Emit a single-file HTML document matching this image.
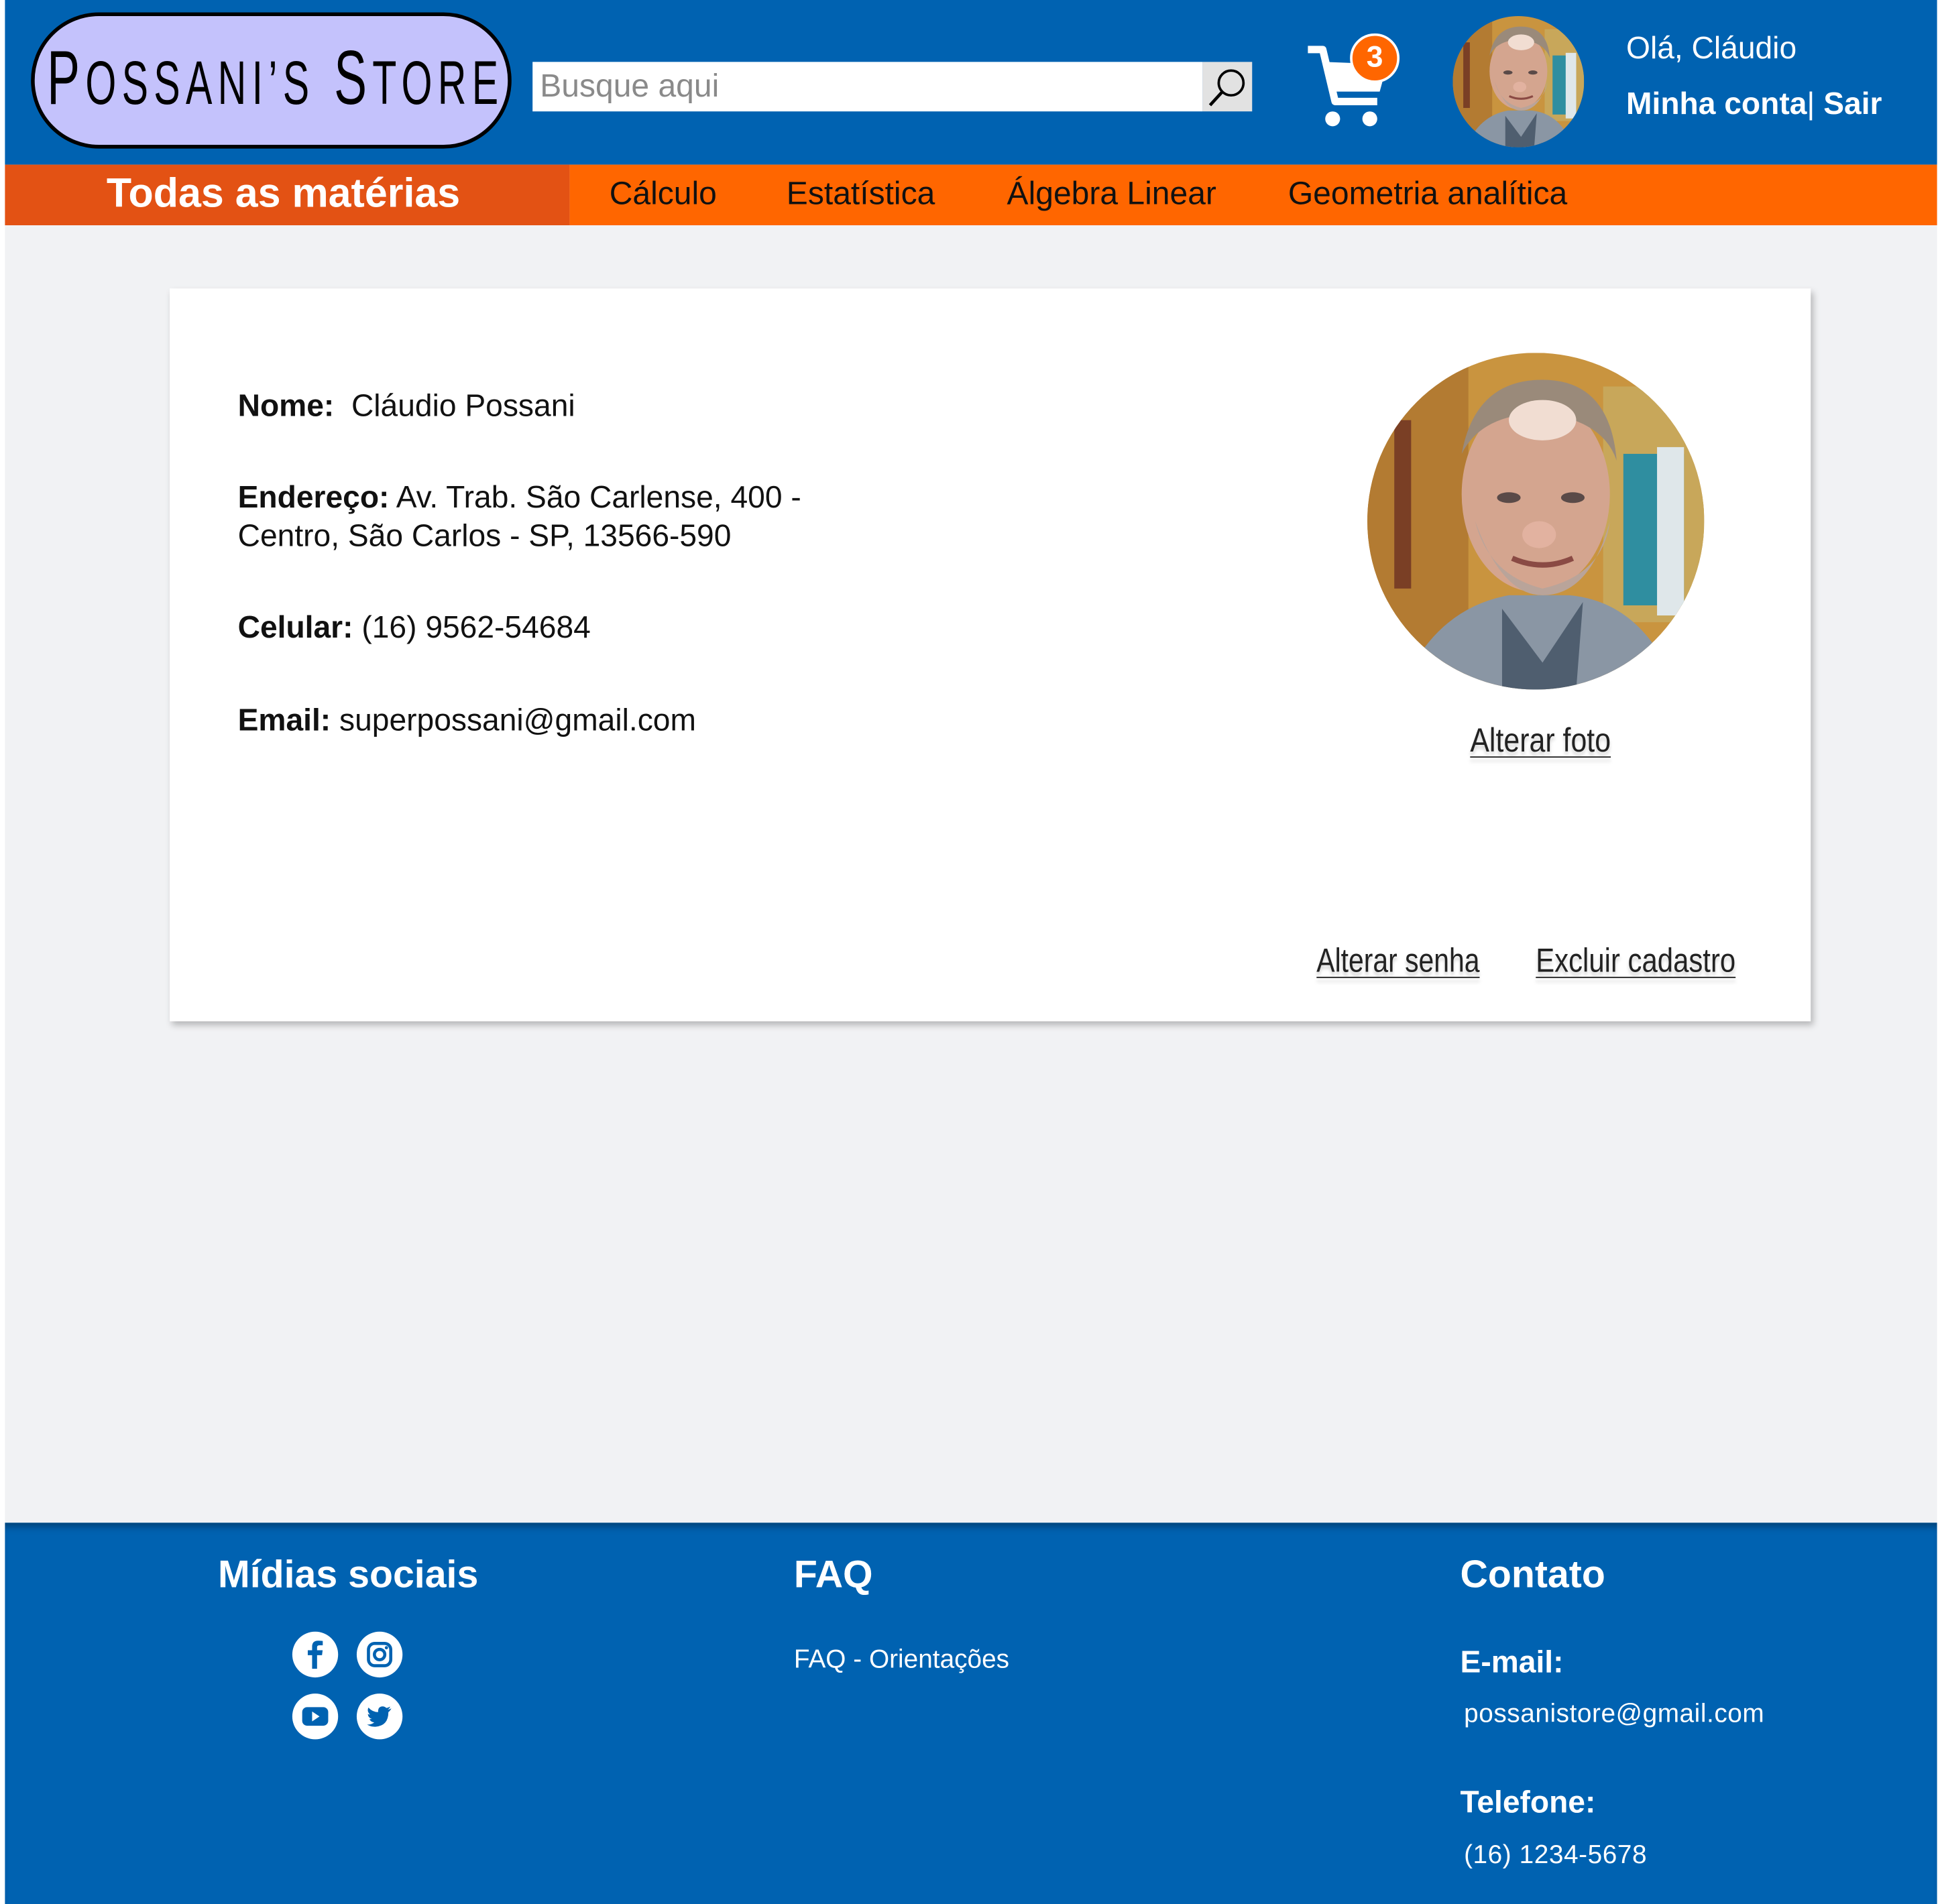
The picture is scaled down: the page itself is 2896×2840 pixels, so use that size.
<!DOCTYPE html>
<html><head><meta charset="utf-8">
<style>
html,body{margin:0;padding:0;width:2896px;height:2840px;overflow:hidden;background:#fff}
#w{position:absolute;left:0;top:0;width:1568px;height:1538px;transform:scale(1.84694,1.84655);transform-origin:0 0;font-family:"Liberation Sans",sans-serif}
.a{position:absolute;white-space:nowrap}
.lnk{color:#222;font-size:27px;text-decoration:underline;text-decoration-thickness:1px;text-underline-offset:4px;text-shadow:0 3px 3px rgba(0,0,0,.18);transform-origin:0 0}
.c{font-size:25px;color:#111}
.c b{font-weight:bold}
.nav{font-size:26px;color:#111;top:141px}
.ft{color:#fff}
.ic{position:absolute;width:37px;height:37px;border-radius:50%;background:#fff}
</style></head><body><div id="w">
<svg width="0" height="0" style="position:absolute">
<defs>
<g id="ph">
<rect x="0" y="0" width="100" height="100" fill="#c9943f"/>
<rect x="0" y="0" width="30" height="100" fill="#b37b32"/>
<rect x="8" y="20" width="5" height="50" fill="#7a3f25"/>
<rect x="70" y="10" width="30" height="70" fill="#c8a75a"/>
<rect x="76" y="30" width="18" height="45" fill="#2f8ea0"/>
<rect x="86" y="28" width="8" height="50" fill="#dfe7ea"/>
<path d="M10 100 Q20 76 42 72 L60 72 Q82 74 92 100Z" fill="#8a96a4"/>
<path d="M40 76 L52 92 L64 74 L62 100 L40 100Z" fill="#4f5e6f"/>
<ellipse cx="50" cy="42" rx="22" ry="29" fill="#d4a58f"/>
<path d="M28 30 Q32 8 52 8 Q72 8 74 32 Q70 20 52 18 Q34 18 28 30Z" fill="#9a8a7a"/>
<ellipse cx="52" cy="20" rx="10" ry="6" fill="#f1ddd2"/>
<path d="M32 50 Q40 72 52 72 Q66 72 72 50 Q70 66 52 70 Q36 66 32 50Z" fill="#b9a49a"/>
<ellipse cx="42" cy="43" rx="3.5" ry="1.6" fill="#5a4a48"/>
<ellipse cx="61" cy="43" rx="3.5" ry="1.6" fill="#5a4a48"/>
<path d="M43 61 Q52 65 61 61" stroke="#8a4a44" stroke-width="1.6" fill="none"/>
<ellipse cx="51" cy="54" rx="5" ry="4" fill="#e2b2a0"/>
</g>
<clipPath id="cc"><circle cx="50" cy="50" r="50"/></clipPath>
</defs></svg>

<!-- header -->
<div class="a" style="left:4px;top:0;width:1560px;height:133px;background:#0062B1"></div>
<div class="a" style="left:25px;top:10px;width:382px;height:104px;border:3px solid #000;border-radius:60px;background:#C4C2FC"></div>
<div class="a" style="left:38px;top:28px;font-size:62px;letter-spacing:7px;color:#000;transform:scaleX(.64);transform-origin:0 0;line-height:72px">P<span style="font-size:50px">OSSANI’S</span> S<span style="font-size:50px">TORE</span></div>
<div class="a" style="left:430px;top:50px;width:541px;height:40px;background:#fff"></div>
<div class="a" style="left:436px;top:54px;font-size:26px;color:#8a8a8a">Busque aqui</div>
<div class="a" style="left:971px;top:50px;width:40px;height:40px;background:#e2e2e2"></div>
<svg class="a" style="left:971px;top:50px" width="40" height="40" viewBox="0 0 40 40"><circle cx="23" cy="17" r="10" fill="none" stroke="#000" stroke-width="2"/><path d="M16 24 L6 35" stroke="#000" stroke-width="2.5"/></svg>
<svg class="a" style="left:1054px;top:30px" width="80" height="75" viewBox="0 0 80 75"><path d="M2 10 L14 10 L24 52 L58 52" stroke="#fff" stroke-width="6" fill="none" stroke-linejoin="round"/><path d="M16 20 L66 22 L60 44 L22 44Z" fill="#fff"/><circle cx="22" cy="66" r="6" fill="#fff"/><circle cx="52" cy="66" r="6" fill="#fff"/></svg>
<div class="a" style="left:1090px;top:27px;width:36px;height:36px;border-radius:50%;background:#FF6600;border:2px solid #fff;color:#fff;font-size:24px;font-weight:bold;text-align:center;line-height:36px">3</div>
<svg class="a" style="left:1173px;top:13px" width="106" height="106" viewBox="0 0 100 100"><g clip-path="url(#cc)"><use href="#ph"/></g></svg>
<div class="a ft" style="left:1313px;top:25px;font-size:25px">Olá, Cláudio</div>
<div class="a ft" style="left:1313px;top:70px;font-size:25px;font-weight:bold">Minha conta<span style="font-weight:normal">|</span> Sair</div>

<!-- nav -->
<div class="a" style="left:4px;top:133px;width:456px;height:49px;background:#E35214"></div>
<div class="a" style="left:460px;top:133px;width:1104px;height:49px;background:#FF6600"></div>
<div class="a" style="left:86px;top:137px;font-size:33px;font-weight:bold;color:#fff">Todas as matérias</div>
<div class="a nav" style="left:492px">Cálculo</div>
<div class="a nav" style="left:635px">Estatística</div>
<div class="a nav" style="left:813px">Álgebra Linear</div>
<div class="a nav" style="left:1040px">Geometria analítica</div>

<!-- main -->
<div class="a" style="left:4px;top:182px;width:1560px;height:1048px;background:#F1F2F4"></div>
<div class="a" style="left:137px;top:233px;width:1325px;height:592px;background:#fff;box-shadow:2px 3px 5px rgba(0,0,0,.25)"></div>
<div class="a c" style="left:192px;top:314px"><b>Nome:</b>&nbsp; Cláudio Possani</div>
<div class="a c" style="left:192px;top:387px;line-height:31px"><b>Endereço:</b> Av. Trab. São Carlense, 400 -<br>Centro, São Carlos - SP, 13566-590</div>
<div class="a c" style="left:192px;top:493px"><b>Celular:</b> (16) 9562-54684</div>
<div class="a c" style="left:192px;top:568px"><b>Email:</b> superpossani@gmail.com</div>
<svg class="a" style="left:1104px;top:285px" width="272" height="272" viewBox="0 0 100 100"><g clip-path="url(#cc)"><use href="#ph"/></g></svg>
<div class="a lnk" style="left:1187px;top:583px;transform:scaleX(.86)">Alterar foto</div>
<div class="a lnk" style="left:1063px;top:761px;transform:scaleX(.82)">Alterar senha</div>
<div class="a lnk" style="left:1240px;top:761px;transform:scaleX(.84)">Excluir cadastro</div>

<!-- footer -->
<div class="a" style="left:4px;top:1230px;width:1560px;height:308px;background:#0062B1;box-shadow:inset 0 6px 6px -3px rgba(0,0,0,.35)"></div>
<div class="a ft" style="left:176px;top:1254px;font-size:31px;font-weight:bold">Mídias sociais</div>
<div class="a ft" style="left:641px;top:1254px;font-size:31px;font-weight:bold">FAQ</div>
<div class="a ft" style="left:1179px;top:1254px;font-size:31px;font-weight:bold">Contato</div>
<div class="ic" style="left:236px;top:1318px"></div>
<div class="ic" style="left:288px;top:1318px"></div>
<div class="ic" style="left:236px;top:1368px"></div>
<div class="ic" style="left:288px;top:1368px"></div>
<svg class="a" style="left:236px;top:1318px" width="37" height="37" viewBox="0 0 37 37"><path d="M20 30 V19 H24 L24.5 15 H20 V12.5 Q20 11 22 11 H24.6 V7.5 Q23 7.3 21 7.3 Q16 7.3 16 12 V15 H12.5 V19 H16 V30Z" fill="#0062B1"/></svg>
<svg class="a" style="left:288px;top:1318px" width="37" height="37" viewBox="0 0 37 37"><rect x="9.5" y="9.5" width="18" height="18" rx="5" fill="none" stroke="#0062B1" stroke-width="2.5"/><circle cx="18.5" cy="18.5" r="4.2" fill="none" stroke="#0062B1" stroke-width="2.5"/><circle cx="24" cy="13" r="1.3" fill="#0062B1"/></svg>
<svg class="a" style="left:236px;top:1368px" width="37" height="37" viewBox="0 0 37 37"><rect x="8" y="11" width="21" height="15" rx="4" fill="#0062B1"/><path d="M16 14.5 L22 18.5 L16 22.5Z" fill="#fff"/></svg>
<svg class="a" style="left:288px;top:1368px" width="37" height="37" viewBox="0 0 37 37"><path d="M28 12 Q26.5 12.8 25 13 Q26.6 12 27 10.5 Q25.5 11.4 24 11.7 Q22 9.8 19.5 10.6 Q17 11.6 17.3 15 Q12.5 14.8 9.5 11.3 Q8 14.3 10.8 17 Q9.8 17 9 16.5 Q9.2 19.6 12.2 20.5 Q11.2 20.8 10.3 20.6 Q11.3 23.1 14.2 23.3 Q11.5 25.4 8.3 25 Q11.4 27 15.2 26.8 Q25.6 26 25.6 15 Q27 14 28 12Z" fill="#0062B1"/></svg>
<div class="a ft" style="left:641px;top:1329px;font-size:21px">FAQ - Orientações</div>
<div class="a ft" style="left:1179px;top:1329px;font-size:25px;font-weight:bold">E-mail:</div>
<div class="a ft" style="left:1182px;top:1373px;font-size:21px;letter-spacing:.3px">possanistore@gmail.com</div>
<div class="a ft" style="left:1179px;top:1442px;font-size:25px;font-weight:bold">Telefone:</div>
<div class="a ft" style="left:1182px;top:1487px;font-size:21px;letter-spacing:.3px">(16) 1234-5678</div>
</div></body></html>
